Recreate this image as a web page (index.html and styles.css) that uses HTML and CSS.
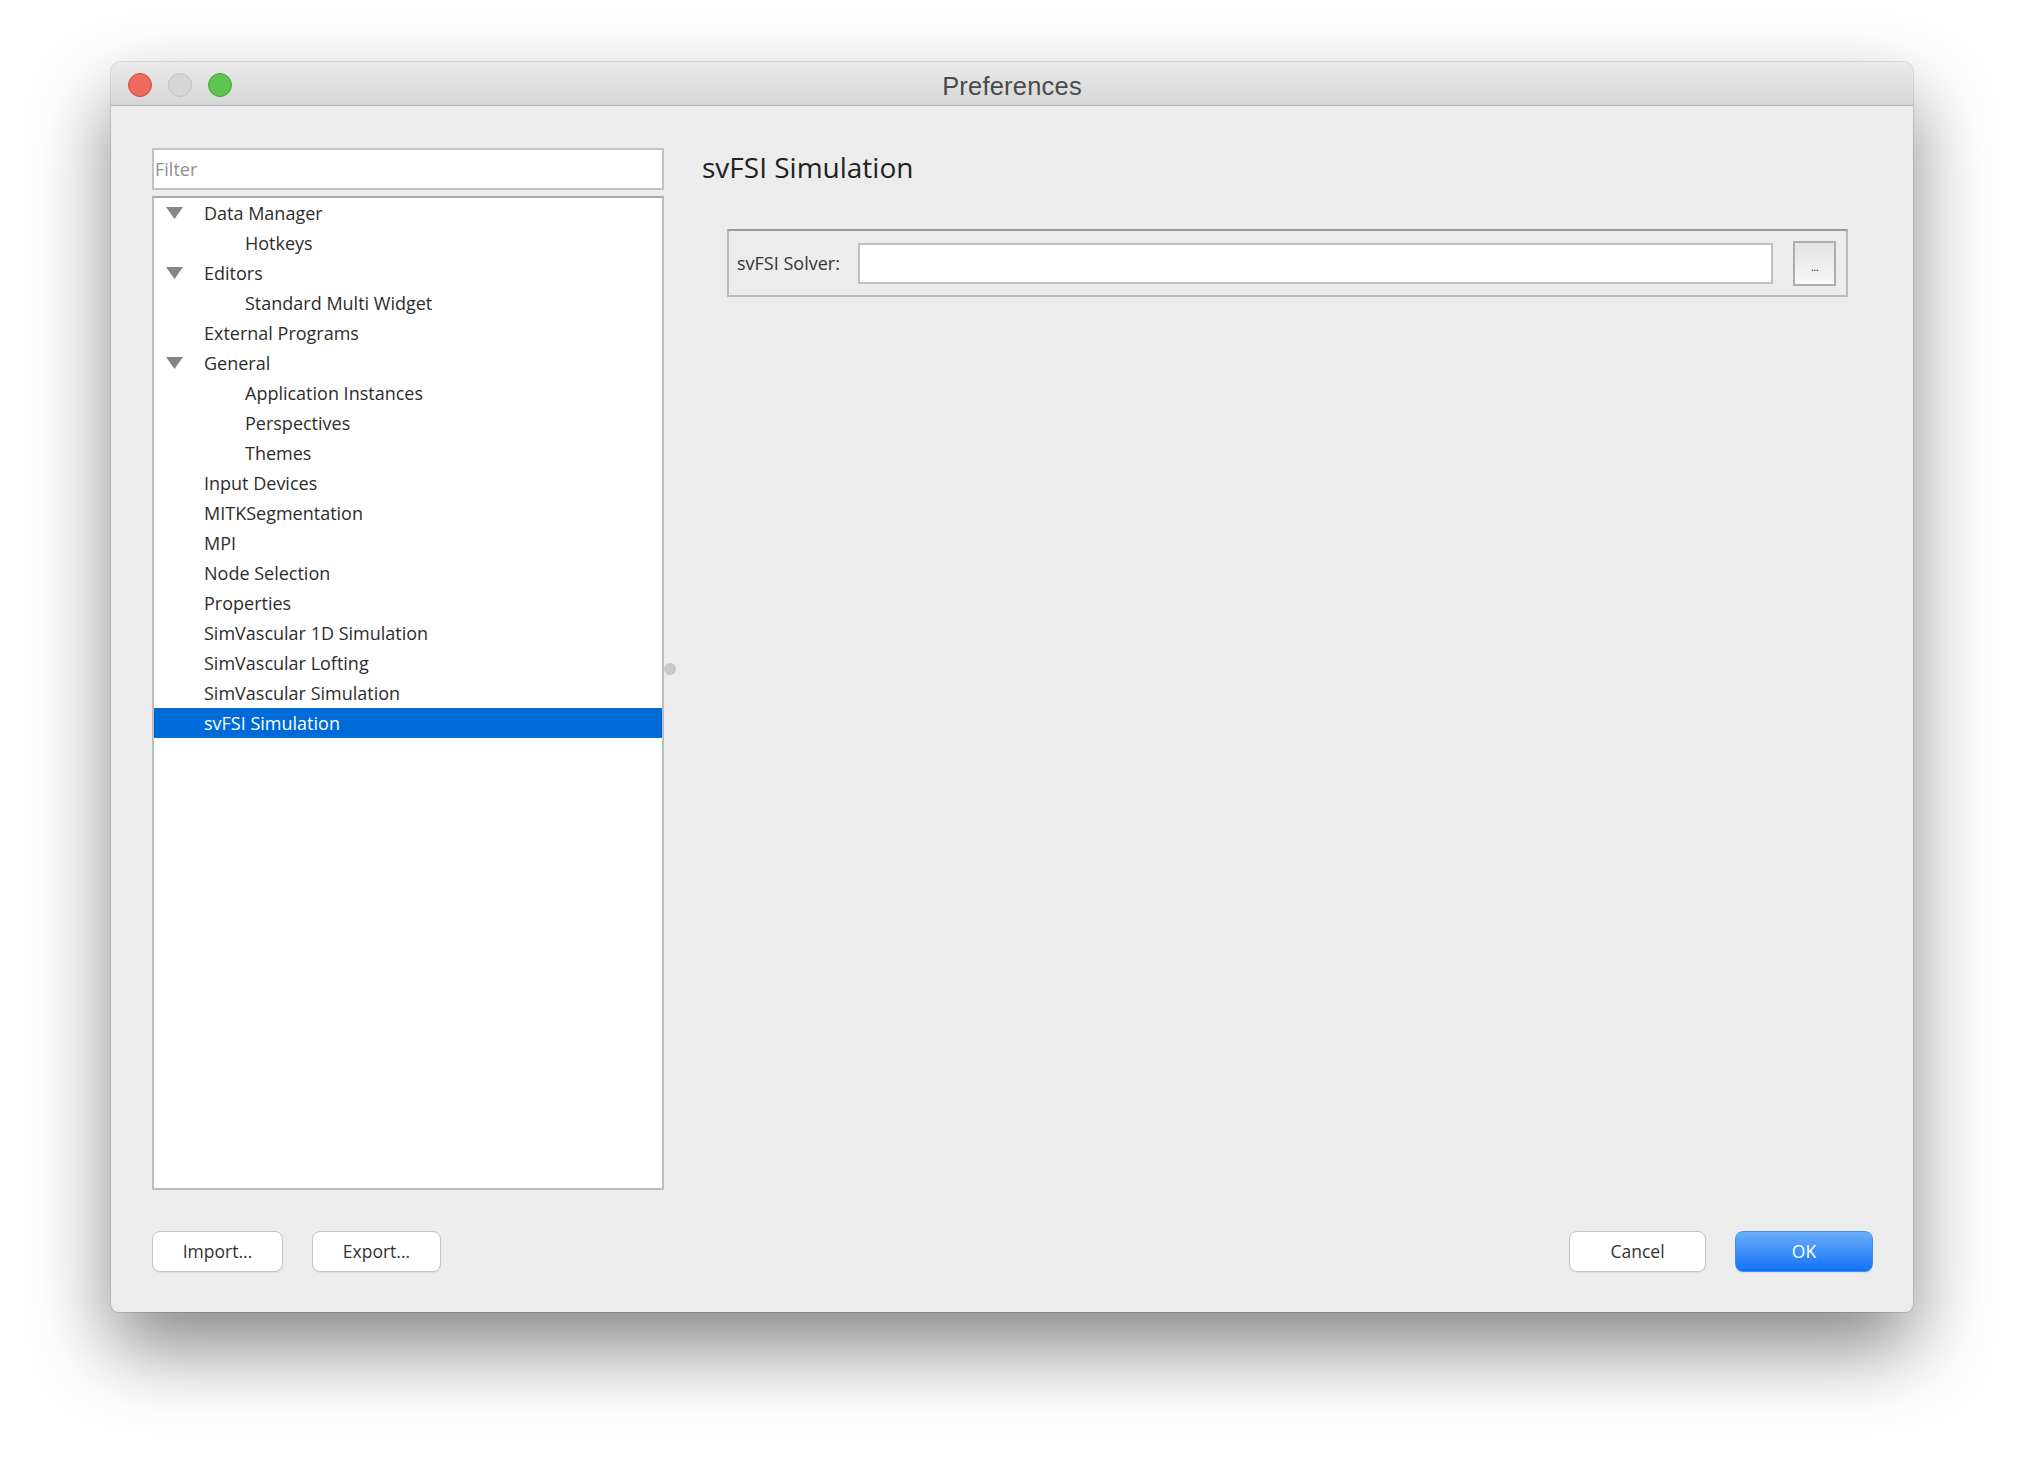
FILE: index.html
```html
<!DOCTYPE html>
<html lang="en">
<head>
<meta charset="utf-8">
<title>Preferences</title>
<link rel="stylesheet" href="styles.css">
</head>
<body>
<div class="window">
  <div class="titlebar">
    <div class="lights">
      <span class="light red"></span>
      <span class="light gray"></span>
      <span class="light green"></span>
    </div>
    <div class="title">Preferences</div>
  </div>
  <div class="content">
    <div class="main">
      <div class="left">
        <input class="filter" type="text" placeholder="Filter">
        <ul class="tree">
          <li class="row"><span class="twisty"><svg width="17" height="12" viewBox="0 0 17 12"><polygon points="0,0 17,0 8.5,12" fill="#858585"/></svg></span><span class="label">Data Manager</span></li>
          <li class="row child"><span class="twisty"></span><span class="label">Hotkeys</span></li>
          <li class="row"><span class="twisty"><svg width="17" height="12" viewBox="0 0 17 12"><polygon points="0,0 17,0 8.5,12" fill="#858585"/></svg></span><span class="label">Editors</span></li>
          <li class="row child"><span class="twisty"></span><span class="label">Standard Multi Widget</span></li>
          <li class="row"><span class="twisty"></span><span class="label">External Programs</span></li>
          <li class="row"><span class="twisty"><svg width="17" height="12" viewBox="0 0 17 12"><polygon points="0,0 17,0 8.5,12" fill="#858585"/></svg></span><span class="label">General</span></li>
          <li class="row child"><span class="twisty"></span><span class="label">Application Instances</span></li>
          <li class="row child"><span class="twisty"></span><span class="label">Perspectives</span></li>
          <li class="row child"><span class="twisty"></span><span class="label">Themes</span></li>
          <li class="row"><span class="twisty"></span><span class="label">Input Devices</span></li>
          <li class="row"><span class="twisty"></span><span class="label">MITKSegmentation</span></li>
          <li class="row"><span class="twisty"></span><span class="label">MPI</span></li>
          <li class="row"><span class="twisty"></span><span class="label">Node Selection</span></li>
          <li class="row"><span class="twisty"></span><span class="label">Properties</span></li>
          <li class="row"><span class="twisty"></span><span class="label">SimVascular 1D Simulation</span></li>
          <li class="row"><span class="twisty"></span><span class="label">SimVascular Lofting</span></li>
          <li class="row"><span class="twisty"></span><span class="label">SimVascular Simulation</span></li>
          <li class="row selected"><span class="twisty"></span><span class="label">svFSI Simulation</span></li>
        </ul>
      </div>
      <div class="splitter"><span class="handle"></span></div>
      <div class="right">
        <h1 class="heading">svFSI Simulation</h1>
        <div class="group">
          <label class="field-label">svFSI Solver:</label>
          <input class="field" type="text">
          <button class="browse">...</button>
        </div>
      </div>
    </div>
    <div class="footer">
      <div class="btns">
        <button class="btn import">Import...</button>
        <button class="btn export">Export...</button>
      </div>
      <div class="btns">
        <button class="btn cancel">Cancel</button>
        <button class="btn ok">OK</button>
      </div>
    </div>
  </div>
</div>
</body>
</html>
```
FILE: styles.css
```css
* { box-sizing: border-box; }
html, body { margin: 0; padding: 0; }
body {
  background: #ffffff;
  width: 2024px;
  height: 1472px;
  padding: 62px 0 0 111px;
  font-family: "Open Sans", "DejaVu Sans", sans-serif;
  overflow: hidden;
}
.window {
  width: 1802px;
  height: 1250px;
  background: #ececec;
  border-radius: 10px 10px 8px 8px;
  box-shadow: 0 36px 80px rgba(0,0,0,0.48), 0 0 0 1px rgba(0,0,0,0.10);
  display: flex;
  flex-direction: column;
  overflow: hidden;
}
.titlebar {
  height: 44px;
  flex: none;
  background: linear-gradient(#ebebeb, #d6d6d6);
  border-bottom: 1px solid #b1b1b1;
  display: flex;
  align-items: center;
  position: relative;
}
.lights {
  display: flex;
  gap: 16px;
  padding-left: 17px;
  padding-top: 2px;
  position: relative;
  z-index: 1;
}
.light {
  width: 24px;
  height: 24px;
  border-radius: 50%;
  display: block;
}
.light.red { background: #ee6a5f; border: 1px solid #d7493f; }
.light.gray { background: #d6d6d6; border: 1px solid #c2c2c2; }
.light.green { background: #5dc44f; border: 1px solid #45a83a; }
.title {
  position: absolute;
  left: 0; right: 0; top: 0; bottom: 0;
  display: flex;
  align-items: center;
  justify-content: center;
  padding-top: 6px;
  font-family: "Liberation Sans", Arial, sans-serif;
  font-size: 25.5px;
  color: #4b4b4b;
  letter-spacing: 0.2px;
}
.content {
  flex: 1;
  display: flex;
  flex-direction: column;
  padding: 42px 40px 40px 41px;
}
.main {
  flex: 1;
  display: flex;
  min-height: 0;
}
.left {
  width: 512px;
  display: flex;
  flex-direction: column;
  gap: 6px;
}
.filter {
  height: 42px;
  width: 100%;
  border: 2px solid #c2c2c2;
  background: #fff;
  font-family: "Open Sans", sans-serif;
  font-size: 18px;
  padding: 0 1px;
  outline: none;
  color: #333;
}
.filter::placeholder { color: #8f8f8f; }
.tree {
  flex: 1;
  margin: 0;
  padding: 0;
  list-style: none;
  background: #fff;
  border: 2px solid #bdbdbd;
  border-top-color: #a9a9a9;
}
.row {
  height: 30px;
  display: flex;
  align-items: center;
  padding-left: 12px;
  font-size: 18px;
  color: #2d2d2d;
  white-space: nowrap;
}
.row.child { padding-left: 53px; }
.twisty {
  width: 17px;
  height: 12px;
  margin-right: 21px;
  display: flex;
  flex: none;
}
.twisty svg { display: block; }
.row.selected {
  background: #006ad9;
  color: #ffffff;
}
.splitter {
  width: 38px;
  display: flex;
  align-items: center;
}
.handle {
  width: 12px;
  height: 12px;
  border-radius: 50%;
  background: #c9c9c9;
  display: block;
}
.right {
  flex: 1;
}
.heading {
  margin: 2px 0 0 0;
  font-size: 28px;
  font-weight: 400;
  line-height: 34px;
  color: #222;
}
.group {
  margin: 45px 25px 0 25px;
  height: 68px;
  border: 2px solid #bababa;
  border-top-color: #999999;
  display: flex;
  align-items: center;
  padding: 0 10px 0 8px;
}
.field-label {
  font-size: 18px;
  color: #333;
  margin-right: 18px;
  white-space: nowrap;
}
.field {
  flex: 1;
  height: 41px;
  border: 2px solid #c0c0c0;
  background: #fff;
  outline: none;
  margin-right: 20px;
}
.browse {
  width: 43px;
  height: 45px;
  border: 2px solid #adadad;
  background: linear-gradient(#e3e3e3, #f8f8f8);
  font-family: "Open Sans", sans-serif;
  font-size: 11px;
  color: #1c2a6b;
  padding: 6px 0 0 0;
  letter-spacing: -0.5px;
}
.footer {
  margin-top: 41px;
  height: 41px;
  display: flex;
  justify-content: space-between;
}
.btns {
  display: flex;
  gap: 29px;
}
.btn {
  height: 41px;
  border: 1.5px solid #c3c3c3;
  border-radius: 8px;
  background: #ffffff;
  font-family: "Open Sans", sans-serif;
  font-size: 17.5px;
  color: #333;
  padding: 0 0 2px 0;
  box-shadow: 0 1px 1px rgba(0,0,0,0.06);
}
.import { width: 131px; }
.export { width: 129px; }
.cancel { width: 137px; }
.ok {
  width: 138px;
  border: 1px solid #3b8ef5;
  background: linear-gradient(#6aaefa, #1272f5);
  color: #ffffff;
}
```
